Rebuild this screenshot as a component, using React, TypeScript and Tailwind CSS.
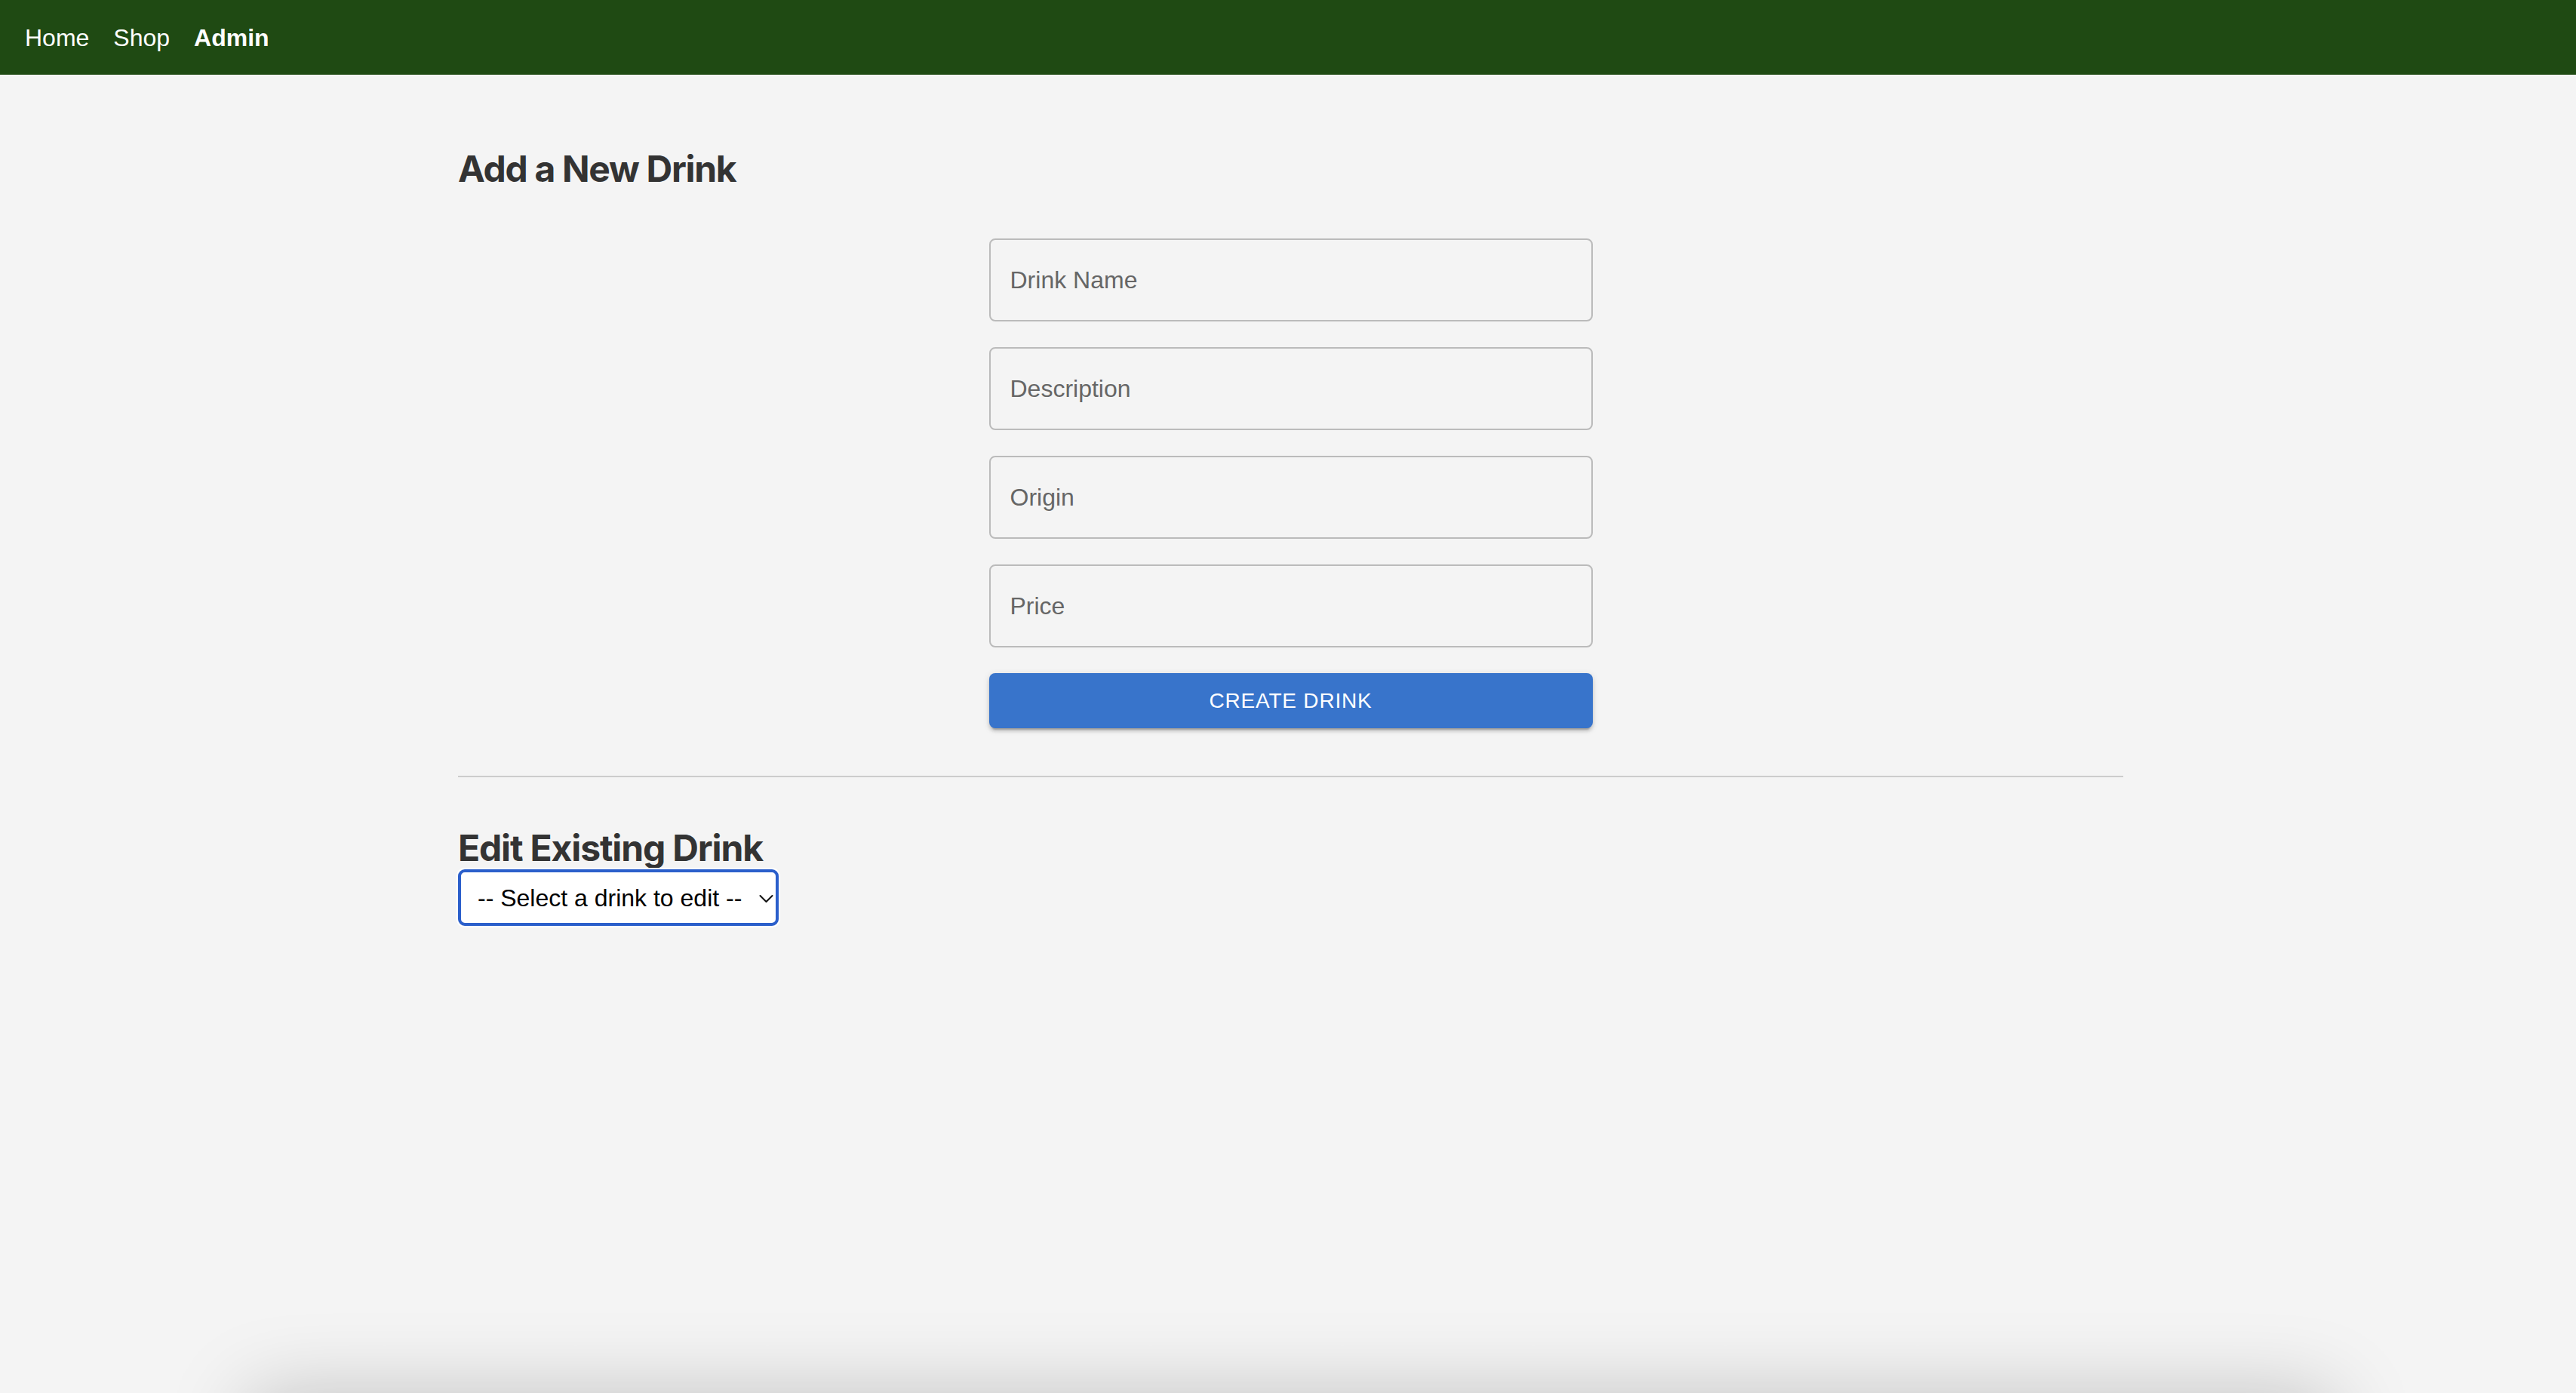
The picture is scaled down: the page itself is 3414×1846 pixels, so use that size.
import React from "react";

const fields = ["Drink Name", "Description", "Origin", "Price"];

export default function App() {
  return (
    <div className="h-[1846px] overflow-hidden bg-[#f4f4f4] flex flex-col">
      <nav className="h-[99px] shrink-0 bg-[#1f4a13] flex items-center gap-[32px] pl-[33px] font-['Liberation_Sans',Arial,sans-serif] text-[32px] text-white">
        <a className="leading-none">Home</a>
        <a className="leading-none">Shop</a>
        <a className="leading-none font-bold">Admin</a>
      </nav>

      <main className="h-[1751px] shrink-0 pl-[7px]">
        <div className="w-[2207px] mx-auto pt-[96px]">
          <h2 className="font-['Inter',sans-serif] font-bold text-[48px] leading-[58px] tracking-[-1.3px] text-[#333]">
            Add a New Drink
          </h2>

          <form className="w-[800px] mx-auto mt-[63px] flex flex-col gap-[34px] font-['Liberation_Sans',Arial,sans-serif]">
            {fields.map((f) => (
              <input
                key={f}
                placeholder={f}
                className="h-[110px] w-full border-2 border-[#bbbbbb] rounded-[8px] bg-transparent pl-[26px] text-[32px] text-[#333] placeholder:text-[#666] outline-none"
              />
            ))}
            <button
              type="button"
              className="h-[73px] w-full rounded-[8px] bg-[#3874cb] text-white text-[28px] tracking-[0.8px] uppercase shadow-[0_6px_2px_-4px_rgba(0,0,0,0.2),0_4px_4px_0_rgba(0,0,0,0.14),0_2px_10px_0_rgba(0,0,0,0.12)]"
            >
              Create Drink
            </button>
          </form>

          <hr className="mt-[63px] border-0 border-t-2 border-[#cccccc]" />

          <h3 className="mt-[66px] font-['Inter',sans-serif] font-bold text-[48px] leading-[56px] tracking-[-1.15px] text-[#333]">
            Edit Existing Drink
          </h3>

          <div className="relative w-[425px] h-[75px] rounded-[9px] shadow-[0_0_0_2px_#ffffff]">
            <select className="appearance-none w-full h-full rounded-[9px] border-[4px] border-[#2b5fcb] bg-white pl-[22px] font-['Liberation_Sans',Arial,sans-serif] text-[32px] text-black outline-none">
              <option>-- Select a drink to edit --</option>
            </select>
            <svg
              className="absolute right-[7px] top-[33px] pointer-events-none"
              width="19"
              height="12"
              viewBox="0 0 19 12"
              fill="none"
            >
              <polyline points="1.5,2 9.5,10 17.5,2" stroke="#111" strokeWidth="2" strokeLinecap="round" strokeLinejoin="round" />
            </svg>
          </div>
        </div>
      </main>

      <div className="shrink-0 h-[300px] w-[2760px] mx-auto translate-x-[4px] bg-[#f4f4f4] shadow-[0_0_110px_rgba(0,0,0,0.22)]" />
    </div>
  );
}
